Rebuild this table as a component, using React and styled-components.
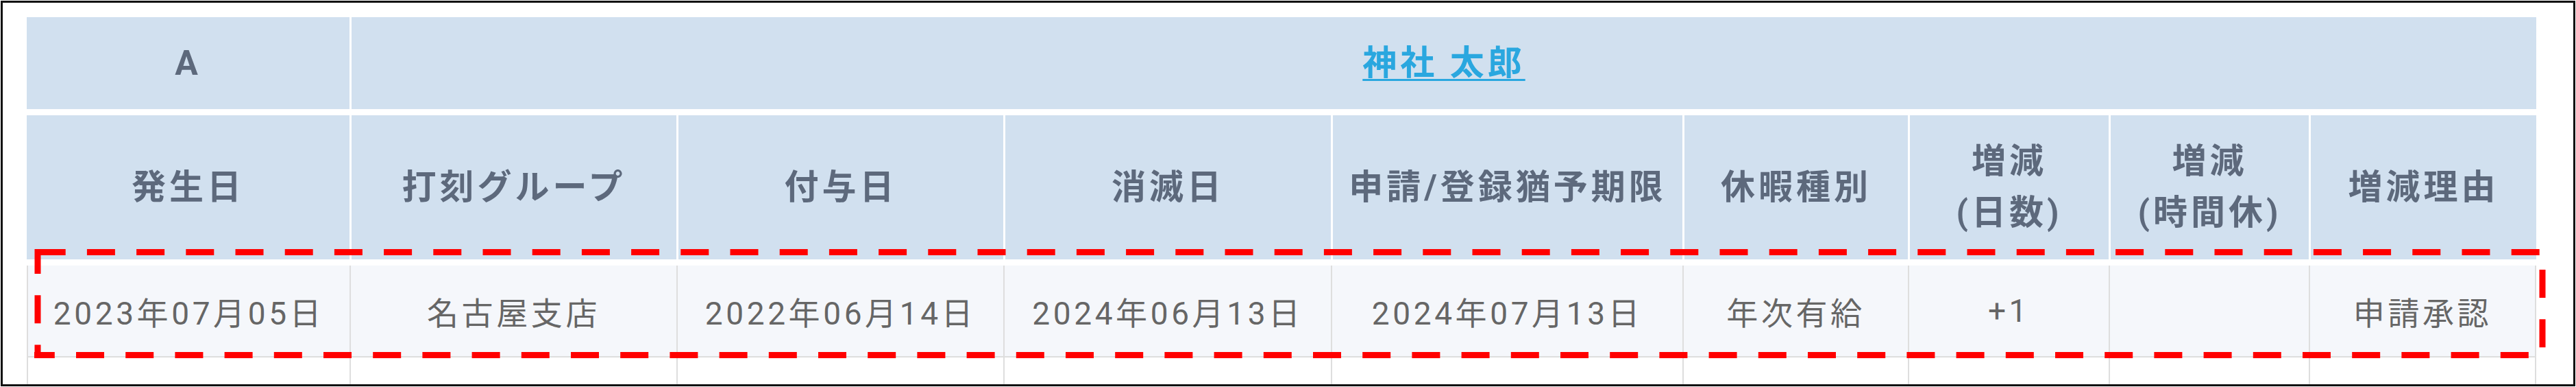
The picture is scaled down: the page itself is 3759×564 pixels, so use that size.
import React from "react";
import styled, { createGlobalStyle } from "styled-components";

const GlobalStyle = createGlobalStyle`
  html, body { margin: 0; padding: 0; background: #fff; }
  body { font-family: Roboto, "Noto Sans CJK JP", sans-serif; }
  * { box-sizing: border-box; }
`;

const COLS = "471px 477px 477px 478px 513px 329px 293px 292px 332px";

const Frame = styled.div`
  margin: 1px;
  height: 562px;
  border: 3px solid #111;
  padding: 21px 54px 0 35px;
  overflow: hidden;
  background: #fff;
`;

const Table = styled.div`
  display: flex;
  flex-direction: column;
  width: 3662px;
`;

const HeadRow = styled.div`
  display: grid;
  grid-template-columns: ${COLS};
  height: ${(p) => p.$h}px;
  margin-bottom: 9px;
`;

const HeadCell = styled.div`
  grid-column: span ${(p) => p.$span || 1};
  background: #d1e0ef;
  border-left: ${(p) => (p.$first ? "0" : "3px solid #fff")};
  display: flex;
  align-items: center;
  justify-content: center;
  text-align: center;
  font-size: 50px;
  font-weight: 700;
  line-height: 1.5;
  letter-spacing: 0.1em;
  color: #5d697c;
`;

const NameLink = styled.a`
  color: #2aa7df;
  text-decoration: underline;
  text-decoration-thickness: 3px;
  text-underline-offset: 6px;
  cursor: pointer;
`;

const BodyWrap = styled.div`
  position: relative;
`;

const BodyRow = styled.div`
  display: grid;
  grid-template-columns: ${COLS};
  height: 134px;
`;

const BodyCell = styled.div`
  background: ${(p) => (p.$blank ? "#ffffff" : "#f5f7fb")};
  border-left: 2px solid #dedede;
  border-right: ${(p) => (p.$last ? "2px solid #dedede" : "0")};
  border-bottom: 2px solid #dedede;
  display: flex;
  align-items: center;
  justify-content: center;
  font-size: 46px;
  font-weight: 400;
  letter-spacing: 0.1em;
  color: #666;
  white-space: nowrap;
`;

const Highlight = styled.svg`
  position: absolute;
  left: 11px;
  top: -24px;
  width: 3665px;
  height: 159px;
  pointer-events: none;
  overflow: visible;
`;

const DashLine = styled.line`
  stroke: #ff0000;
  stroke-width: 9;
  stroke-dasharray: 41 31.2;
`;

const heads = [
  "発生日",
  "打刻グループ",
  "付与日",
  "消滅日",
  "申請/登録猶予期限",
  "休暇種別",
  ["増減", "(日数)"],
  ["増減", "(時間休)"],
  "増減理由",
];

const row = [
  "2023年07月05日",
  "名古屋支店",
  "2022年06月14日",
  "2024年06月13日",
  "2024年07月13日",
  "年次有給",
  "+1",
  "",
  "申請承認",
];

export default function App() {
  return (
    <>
      <GlobalStyle />
      <Frame>
        <Table>
          <HeadRow $h={134}>
            <HeadCell $first>A</HeadCell>
            <HeadCell $span={8}>
              <NameLink>神社 太郎</NameLink>
            </HeadCell>
          </HeadRow>
          <HeadRow $h={210}>
            {heads.map((h, i) => (
              <HeadCell key={i} $first={i === 0}>
                {Array.isArray(h) ? (
                  <span>
                    {h[0]}
                    <br />
                    {h[1]}
                  </span>
                ) : (
                  h
                )}
              </HeadCell>
            ))}
          </HeadRow>
          <BodyWrap>
            <BodyRow>
              {row.map((t, i) => (
                <BodyCell key={i} $last={i === row.length - 1}>
                  {t}
                </BodyCell>
              ))}
            </BodyRow>
            <BodyRow>
              {row.map((_, i) => (
                <BodyCell key={i} $blank $last={i === row.length - 1} />
              ))}
            </BodyRow>
            <Highlight viewBox="0 0 3665 159">
              <DashLine x1="4.7" y1="4.5" x2="3665" y2="4.5" />
              <DashLine x1="5" y1="0" x2="5" y2="159" strokeDashoffset="5" />
              <DashLine x1="3660" y1="0" x2="3660" y2="159" strokeDashoffset="42.2" />
              <DashLine x1="0" y1="154.5" x2="3665" y2="154.5" strokeDashoffset="11.2" />
            </Highlight>
          </BodyWrap>
        </Table>
      </Frame>
    </>
  );
}
